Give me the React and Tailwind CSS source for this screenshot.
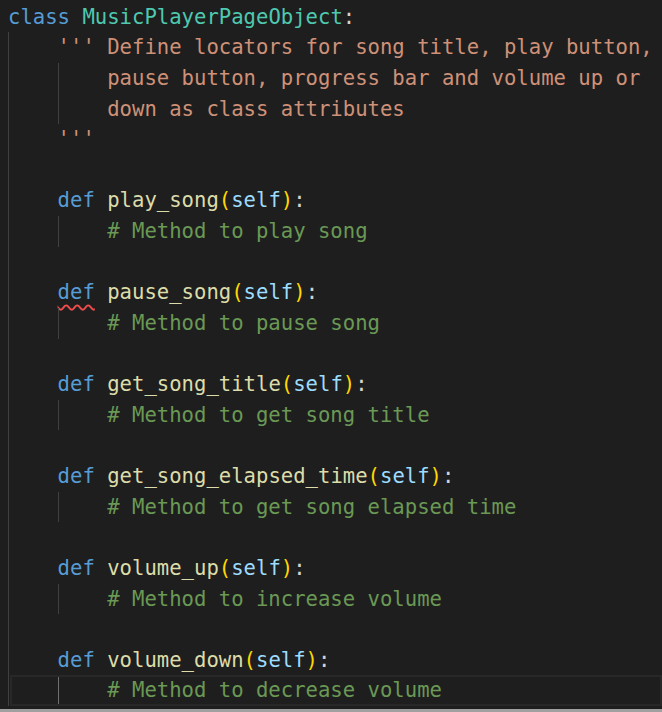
// App.jsx
const KW = "text-[#569cd6]";
const CLS = "text-[#4ec9b0]";
const FN = "text-[#dcdcaa]";
const PAREN = "text-[#ffd700]";
const SELF = "text-[#9cdcfe]";
const PUNC = "text-[#d4d4d4]";
const STR = "text-[#ce9178]";
const COM = "text-[#6a9955]";

const def = (name, squiggle = false) => ({
  indent: 1,
  tokens: [
    { t: "def", c: KW, squiggle },
    { t: " " },
    { t: name, c: FN },
    { t: "(", c: PAREN },
    { t: "self", c: SELF },
    { t: ")", c: PAREN },
    { t: ":", c: PUNC },
  ],
});

const comment = (text, active = false) => ({
  indent: 2,
  active,
  tokens: [{ t: `# ${text}`, c: COM }],
});

const blank = { indent: 1, tokens: [], blank: true };

const lines = [
  {
    indent: 0,
    tokens: [
      { t: "class", c: KW },
      { t: " " },
      { t: "MusicPlayerPageObject", c: CLS },
      { t: ":", c: PUNC },
    ],
  },
  {
    indent: 1,
    tokens: [{ t: "''' Define locators for song title, play button,", c: STR }],
  },
  {
    indent: 2,
    tokens: [{ t: "pause button, progress bar and volume up or", c: STR }],
  },
  { indent: 2, tokens: [{ t: "down as class attributes", c: STR }] },
  { indent: 1, tokens: [{ t: "'''", c: STR }] },
  blank,
  def("play_song"),
  comment("Method to play song"),
  blank,
  def("pause_song", true),
  comment("Method to pause song"),
  blank,
  def("get_song_title"),
  comment("Method to get song title"),
  blank,
  def("get_song_elapsed_time"),
  comment("Method to get song elapsed time"),
  blank,
  def("volume_up"),
  comment("Method to increase volume"),
  blank,
  def("volume_down"),
  comment("Method to decrease volume", true),
];

function CodeLine({ line }) {
  const guides = [];
  for (let i = 0; i < line.indent; i++) {
    const bright = line.active && i === line.indent - 1;
    guides.push(
      <span
        key={i}
        className={`inline-block h-full w-[4ch] shrink-0 border-l ${
          bright ? "border-[#707070]" : "border-[#404040]"
        }`}
      />
    );
  }

  return (
    <div className="relative flex h-[30.64px] items-center whitespace-pre pl-[8px]">
      {line.active && (
        <div className="pointer-events-none absolute inset-y-0 left-[10px] right-0 border-2 border-[#282828]" />
      )}
      {guides}
      {line.tokens.map((tok, i) => (
        <span
          key={i}
          className={`${tok.c || ""} ${
            tok.squiggle
              ? "underline decoration-wavy decoration-[#f14c4c] decoration-[1.5px] underline-offset-[5px]"
              : ""
          }`}
        >
          {tok.t}
        </span>
      ))}
    </div>
  );
}

export default function App() {
  return (
    <div className="flex h-[712px] w-[662px] flex-col overflow-hidden bg-[#1e1e1e]">
      <div
        className="flex-1 pt-[1.7px] text-[20.6px] leading-none text-[#d4d4d4]"
        style={{ fontFamily: '"DejaVu Sans Mono", "Liberation Mono", monospace' }}
      >
        {lines.map((line, i) => (
          <CodeLine key={i} line={line} />
        ))}
      </div>
      <div className="h-[3px] bg-[#a0a0a0]" />
    </div>
  );
}
